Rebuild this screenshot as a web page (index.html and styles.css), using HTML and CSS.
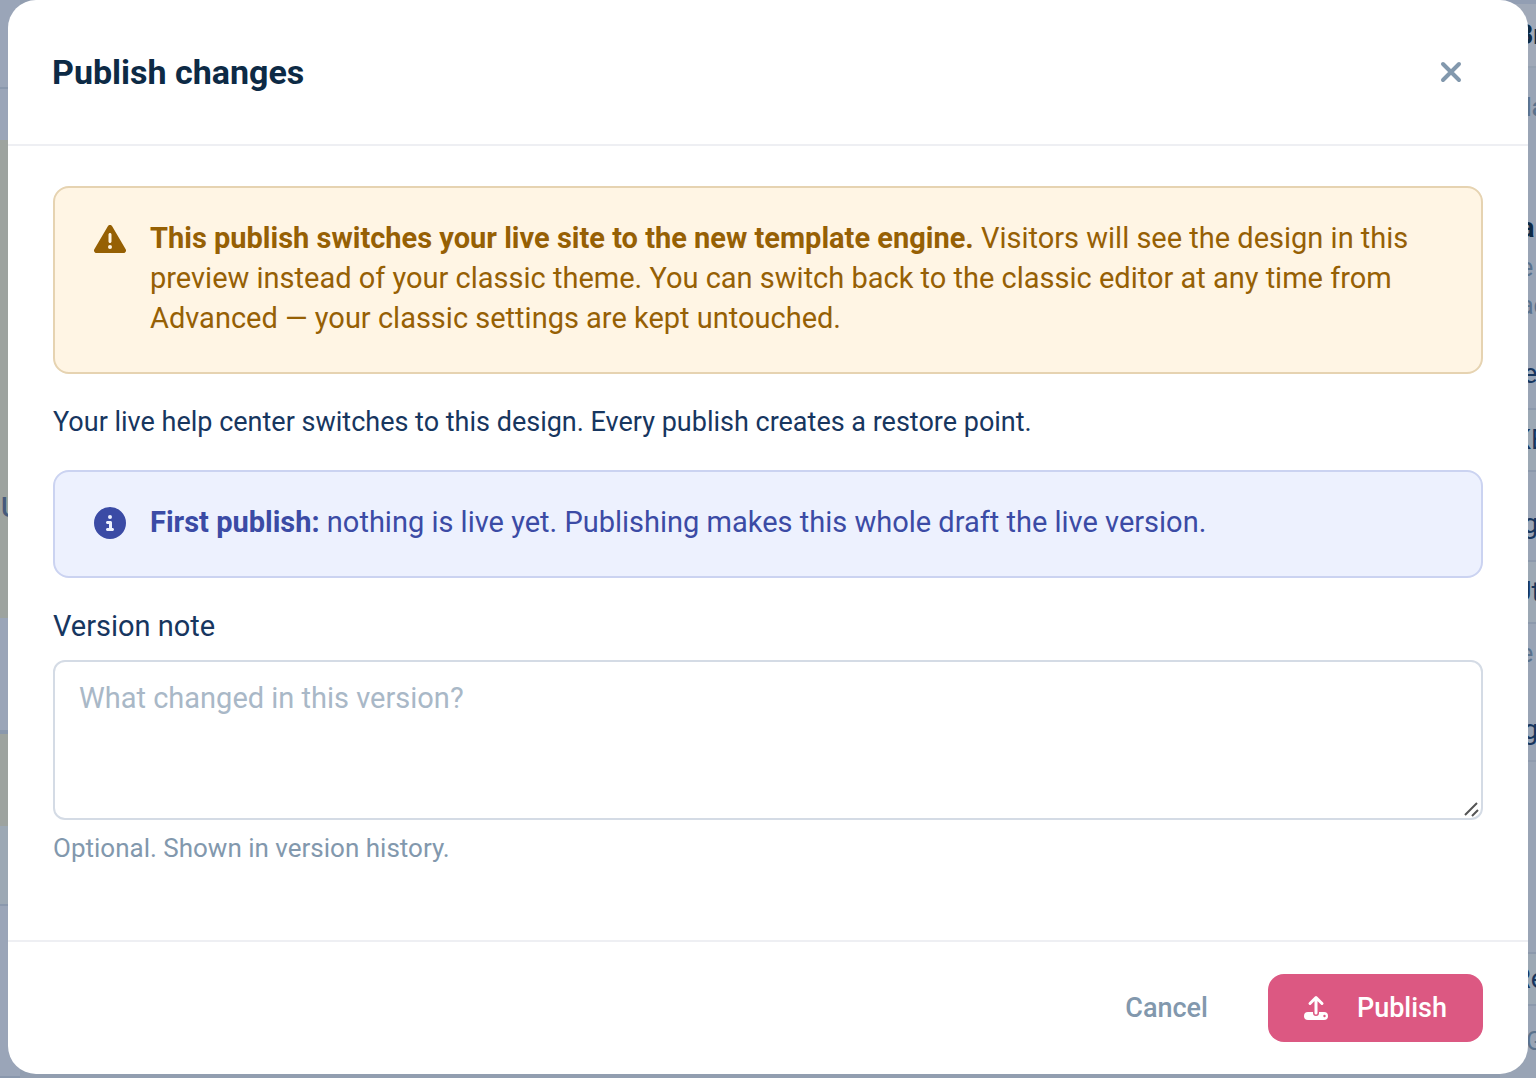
FILE: index.html
```html
<!DOCTYPE html>
<html lang="en">
<head>
    <meta charset="UTF-8">
    <meta name="viewport" content="width=device-width, initial-scale=1.0">
    <title>Publish changes</title>
    <link rel="stylesheet" href="styles.css">
</head>
<body>
    <!-- Editor behind the dialog -->
    <div class="editor" aria-hidden="true">
        <div class="preview">
            <div class="strip"></div>
            <div class="strip strip-line"></div>
            <div class="strip"></div>
            <div class="strip strip-green">U</div>
            <div class="strip strip-line"></div>
            <div class="strip strip-green strip-line"></div>
            <div class="strip strip-light"></div>
            <div class="strip strip-line"></div>
        </div>
        <div class="settings">
            <div class="row row-head">Br</div>
            <div class="row row-muted row-tab">Na</div>
            <div class="row"></div>
            <div class="row row-bold">a</div>
            <div class="row row-muted">e</div>
            <div class="row row-muted">ac</div>
            <div class="row row-label">e</div>
            <div class="row row-input">KE</div>
            <div class="row row-label">g</div>
            <div class="row row-input">Ut</div>
            <div class="row row-muted">e</div>
            <div class="row row-label">g</div>
            <div class="row row-space"></div>
            <div class="row row-input">Re</div>
            <div class="row row-muted row-last">G</div>
        </div>
    </div>

    <div class="modal" role="dialog" aria-labelledby="modal-title">
        <div class="modal-header">
            <h2 id="modal-title">Publish changes</h2>
            <button type="button" class="btn-close" aria-label="Close">
                <svg width="22" height="22" viewBox="0 0 22 22" fill="none" stroke="currentColor" stroke-width="4" stroke-linecap="round">
                    <path d="M3 3l16 16M19 3L3 19"/>
                </svg>
            </button>
        </div>

        <form class="modal-form">
            <div class="modal-body">
                <div class="alert alert-warning">
                    <svg class="alert-icon" viewBox="0 0 512 512" fill="currentColor">
                        <path fill-rule="evenodd" d="M256 32c14.200 0 27.300 7.500 34.500 19.800l216 368c7.300 12.400 7.300 27.700.2 40.100S486.300 480 472 480H40c-14.300 0-27.600-7.700-34.700-20.100s-7-27.800.2-40.100l216-368C228.700 39.500 241.800 32 256 32zm0 128c-13.300 0-24 10.700-24 24v112c0 13.300 10.700 24 24 24s24-10.700 24-24V184c0-13.300-10.700-24-24-24zm32 224a32 32 0 1 0-64 0 32 32 0 1 0 64 0z"/>
                    </svg>
                    <p><strong>This publish switches your live site to the new template engine.</strong> Visitors will see the design in this preview instead of your classic theme. You can switch back to the classic editor at any time from Advanced — your classic settings are kept untouched.</p>
                </div>

                <p class="summary">Your live help center switches to this design. Every publish creates a restore point.</p>

                <div class="alert alert-info">
                    <svg class="alert-icon" viewBox="0 0 512 512" fill="currentColor">
                        <path fill-rule="evenodd" d="M256 512A256 256 0 1 0 256 0a256 256 0 1 0 0 512zM216 336h24v-64h-24c-13.300 0-24-10.700-24-24s10.700-24 24-24h48c13.300 0 24 10.700 24 24v88h8c13.300 0 24 10.700 24 24s-10.700 24-24 24h-80c-13.300 0-24-10.700-24-24s10.700-24 24-24zm40-208a32 32 0 1 1 0 64 32 32 0 1 1 0-64z"/>
                    </svg>
                    <p><strong>First publish:</strong> nothing is live yet. Publishing makes this whole draft the live version.</p>
                </div>

                <div class="form-group">
                    <label for="note">Version note</label>
                    <div class="note-box">
                        <textarea id="note" name="note" placeholder="What changed in this version?" aria-describedby="note-hint"></textarea>
                        <svg class="grip" width="16" height="16" viewBox="0 0 16 16" fill="none" stroke="#555" stroke-width="2">
                            <path d="M2 14L14 2M9 15l6-6"/>
                        </svg>
                    </div>
                    <p class="hint" id="note-hint">Optional. Shown in version history.</p>
                </div>
            </div>

            <div class="modal-footer">
                <button type="button" class="btn btn-cancel">Cancel</button>
                <button type="submit" class="btn btn-publish">
                    <svg width="24" height="26" viewBox="0 0 24 26" fill="none">
                        <path fill="currentColor" fill-rule="evenodd" d="M4 17h5v1a3 3 0 0 0 6 0v-1h5a4 4 0 0 1 0 8H4a4 4 0 0 1 0-8zm16.500 2.800a1.200 1.200 0 1 0 0 2.400 1.200 1.200 0 0 0 0-2.400z"/>
                        <path stroke="currentColor" stroke-width="3" stroke-linecap="round" stroke-linejoin="round" d="M12 18V3M6 8.500l6-6 6 6"/>
                    </svg>
                    Publish
                </button>
            </div>
        </form>
    </div>
</body>
</html>
```

FILE: styles.css
```css
* {
    box-sizing: border-box;
}
body {
    margin: 0;
    font-family: Roboto, sans-serif;
    font-size: 29px;
    line-height: 40px;
    color: #17365f;
    background-color: #929eb0;
}
h2, p {
    margin: 0;
}
button, textarea {
    font-family: inherit;
}

/* editor behind the dialog */
.editor {
    display: flex;
    justify-content: space-between;
    height: 100vh;
    overflow: hidden;
}
.preview, .settings {
    display: grid;
    background-color: #99a4b5;
}
.preview {
    width: 20px;
    grid-template-rows: 68fr 21fr 51fr 478fr 114fr 94fr 80fr 172fr;
}
.strip {
    display: flex;
    align-items: flex-end;
    min-height: 0;
    background-color: #9aa5b8;
}
.strip-line {
    border-bottom: 2px solid #8a98ad;
}
.strip-green {
    padding: 0 0 90px 1px;
    font-size: 27px;
    font-weight: 500;
    color: #455a7b;
    background-color: #9da39f;
}
.strip-line.strip-green {
    padding: 0;
    border: none;
    border-top: 2px solid #8a98ad;
}
.strip-light {
    background-color: #9ca8b4;
    border-bottom: 2px solid #8a98ad;
}
.settings {
    width: 36px;
    grid-template-rows: 68fr 80fr 60fr 40fr 40fr 36fr 84fr 64fr 88fr 64fr 60fr 76fr 192fr 54fr 72fr;
}
.row {
    display: flex;
    align-items: center;
    min-height: 0;
    padding-left: 20px;
    font-size: 27px;
}
.row-head {
    padding-left: 16px;
    font-weight: 700;
    color: #0d2a45;
    background-color: #a0a9b8;
    border-top: 4px solid #929eb3;
    border-bottom: 2px solid #94a0b0;
}
.row-bold {
    font-weight: 700;
    color: #0d2a45;
}
.row-muted {
    font-size: 25px;
    color: #5a728d;
}
.row-tab {
    padding-left: 14px;
    font-weight: 500;
}
.row-label {
    padding: 16px 0 0 23px;
}
.row-input {
    padding-left: 14px;
    background-color: #9ca8b4;
    border-top: 2px solid #8c99ac;
    border-bottom: 2px solid #8c99ac;
}
.row-space {
    border-top: 2px solid #8f9bae;
}
.row-last {
    padding-left: 26px;
}

/* dialog */
.modal {
    position: absolute;
    top: 0;
    left: 8px;
    right: 8px;
    background-color: #fff;
    border-radius: 28px;
}
.modal-header {
    display: flex;
    align-items: center;
    justify-content: space-between;
    padding: 44px;
    border-bottom: 2px solid #eeeff3;
}
.modal-header h2 {
    font-size: 34px;
    line-height: 56px;
    font-weight: 700;
    color: #0d2a45;
}
.btn-close {
    display: flex;
    align-items: center;
    justify-content: center;
    width: 66px;
    height: 54px;
    padding: 0;
    border: none;
    background: none;
    color: #8298ad;
    cursor: pointer;
}
.modal-body {
    display: flex;
    flex-direction: column;
    gap: 28px;
    padding: 40px 45px 72px;
}
.alert {
    display: flex;
    gap: 24px;
    padding: 30px 40px 34px 39px;
    border: 2px solid;
    border-radius: 16px;
}
.alert-icon {
    flex: none;
    width: 32px;
    height: 42px;
}
.alert-warning {
    color: #966004;
    background-color: #fff5e4;
    border-color: #e6d3b1;
}
.alert-info {
    padding-bottom: 32px;
    color: #3b4ba5;
    background-color: #edf1fe;
    border-color: #cbd3f1;
}
.alert p {
    flex: 1;
}
.summary {
    font-size: 27px;
}
.form-group {
    display: flex;
    flex-direction: column;
}
.note-box {
    display: flex;
    position: relative;
    margin: 14px 0 8px;
}
textarea {
    width: 100%;
    height: 160px;
    padding: 16px 24px;
    font-size: 29px;
    line-height: 40px;
    color: #17365f;
    background-color: #fff;
    border: 2px solid #d4dbe5;
    border-radius: 12px;
    resize: vertical;
}
textarea::placeholder {
    color: #a9b8c7;
}
textarea::-webkit-resizer {
    background: transparent;
}
.grip {
    position: absolute;
    right: 4px;
    bottom: 3px;
    pointer-events: none;
}
.hint {
    font-size: 26px;
    color: #8298ad;
}
.modal-footer {
    display: flex;
    justify-content: flex-end;
    gap: 24px;
    padding: 32px 45px;
    border-top: 2px solid #eeeff3;
}
.btn {
    display: flex;
    align-items: center;
    gap: 29px;
    height: 68px;
    padding: 0 36px;
    font-size: 27px;
    font-weight: 500;
    border: none;
    border-radius: 16px;
    cursor: pointer;
}
.btn-cancel {
    color: #8298ad;
    background: none;
}
.btn-publish {
    color: #fff;
    background-color: #dc5882;
}
```
